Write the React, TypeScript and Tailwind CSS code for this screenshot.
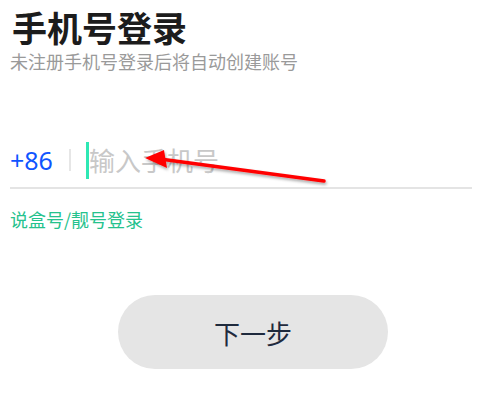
import React from "react";

export default function App() {
  return (
    <div
      className="relative w-[480px] h-[402px] bg-white overflow-hidden"
      style={{ fontFamily: '"Noto Sans CJK SC", "Noto Sans", sans-serif' }}
    >
      <div className="flex flex-col px-[10px]">
        <h1 className="mt-[9px] text-[35px] leading-none font-bold text-[#1c1c1c] pl-[2px]">
          手机号登录
        </h1>
        <p className="mt-[8px] text-[18px] leading-none text-[#9a9a9a]">
          未注册手机号登录后将自动创建账号
        </p>

        <div className="mt-[71px] flex items-center h-[38px]">
          <span
            className="text-[25px] leading-none text-[#0f54ff]"
            style={{ fontFamily: '"Noto Sans", sans-serif' }}
          >
            +86
          </span>
          <span className="ml-[16px] w-[2px] h-[22px] bg-[#e6e6e6]" />
          <span className="ml-[15px] w-[3px] h-[37px] bg-[#2ee8b4]" />
          <span className="text-[26px] leading-none text-[#c8c8c8]">输入手机号</span>
        </div>
        <div className="mt-[8px] h-[2px] bg-[#e4e4e4] mr-[-2px]" />

        <a className="mt-[21px] text-[18px] leading-none text-[#25c28d]">说盒号/靓号登录</a>

        <div className="mt-[67px] flex">
          <button className="ml-[108px] w-[270px] h-[74px] rounded-full bg-[#e5e5e5] text-[26px] text-[#1f2a3d] flex items-center justify-center">
            下一步
          </button>
        </div>
      </div>

      <svg className="absolute inset-0 pointer-events-none" width="480" height="402">
        <defs>
          <filter id="sh" x="-20%" y="-50%" width="140%" height="200%">
            <feDropShadow dx="1" dy="2" stdDeviation="1.5" floodColor="#000" floodOpacity="0.35" />
          </filter>
        </defs>
        <g filter="url(#sh)">
          <line x1="324" y1="181" x2="160" y2="159" stroke="#ff0000" strokeWidth="3.5" strokeLinecap="round" />
          <polygon points="145,158 164,150 167,168" fill="#ff0000" />
        </g>
      </svg>
    </div>
  );
}
